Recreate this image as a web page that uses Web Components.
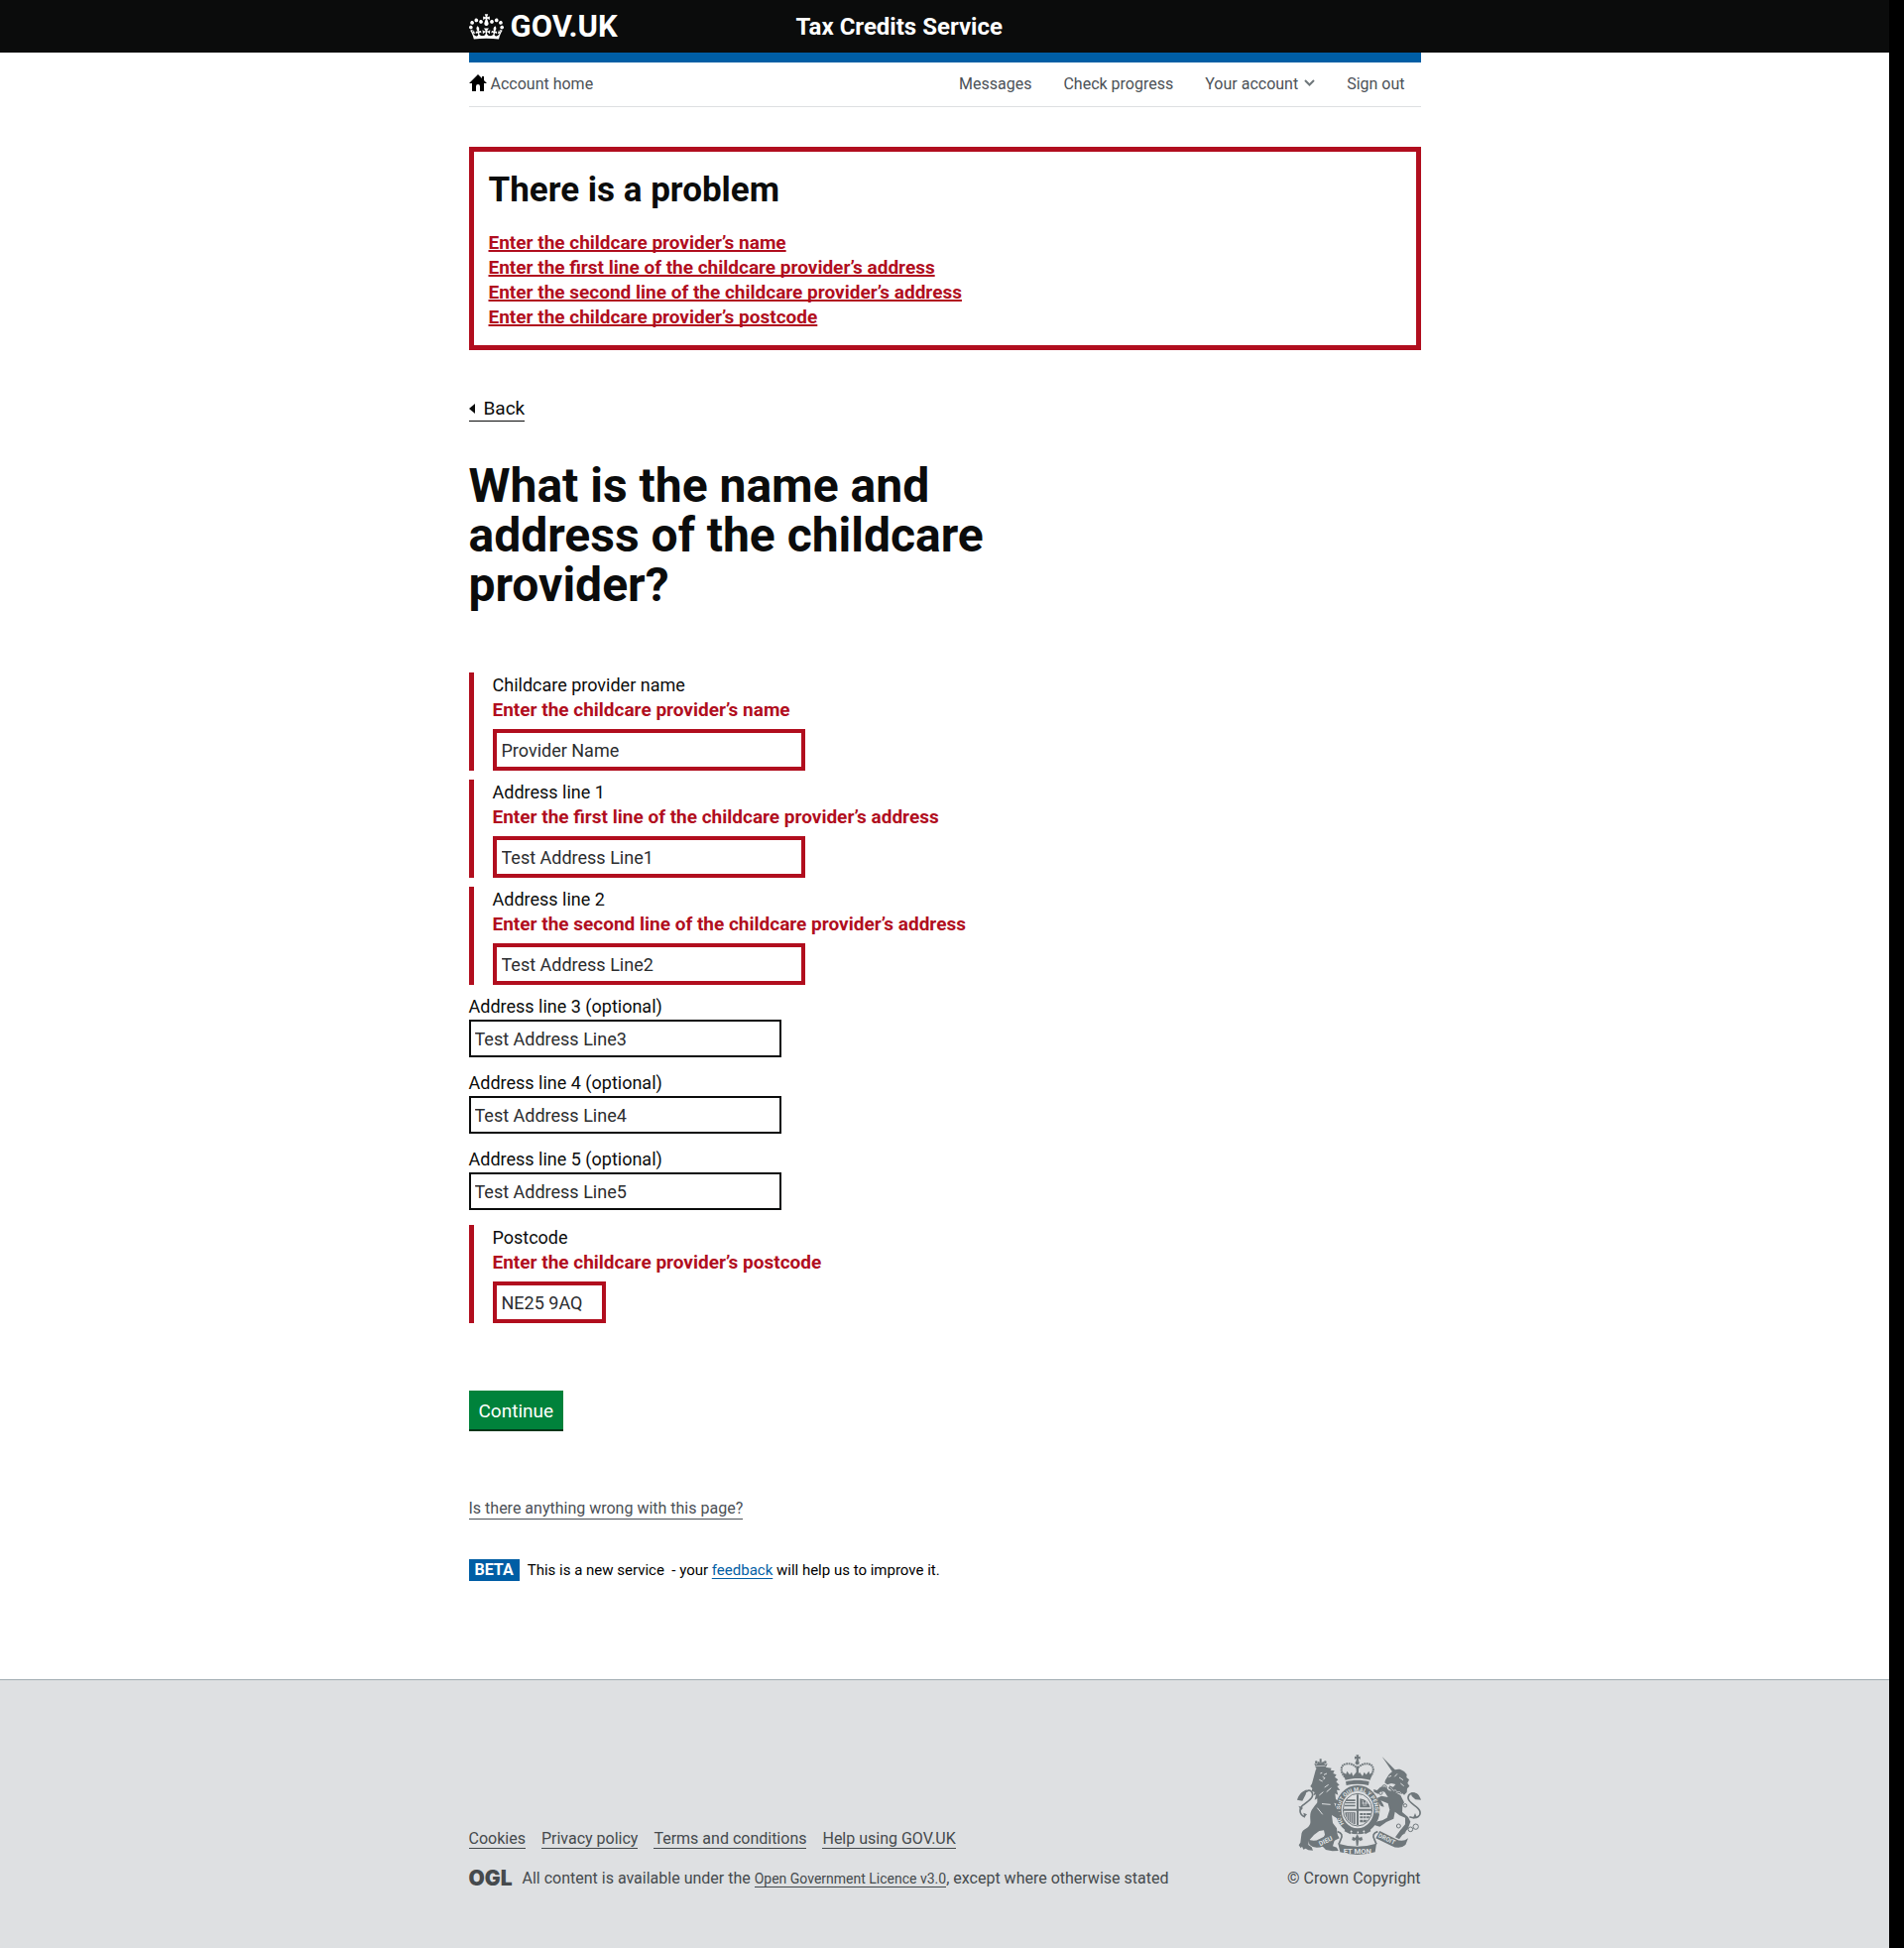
<!DOCTYPE html>
<html lang="en">
<head>
<meta charset="utf-8">
<title>Tax Credits Service</title>
<style>
  body { margin: 0; background: #000; font-family: Roboto, "Liberation Sans", sans-serif; font-size: 19px; line-height: 25px; color: #0b0c0c; }
</style>
</head>
<body>
<tax-page></tax-page>

<template id="tax-page">
  <style>
    :host { display: flex; flex-direction: column; min-height: 100vh; margin-right: 15px; background: #fff; }
    main { box-sizing: border-box; width: 100%; max-width: 960px; margin: 0 auto; flex: 1; padding-bottom: 98px; }
    h1 { margin: 40px 0 63px; max-width: 610px; font-size: 48px; line-height: 50px; font-weight: 700; }
    .back { display: inline-flex; align-items: center; gap: 9px; margin-top: 47px; color: #0b0c0c; text-decoration: none; border-bottom: 1px solid #0b0c0c; line-height: 24px; }
    form { display: flex; flex-direction: column; align-items: flex-start; }
    .address { display: flex; flex-direction: column; margin-bottom: 2px; align-self: stretch; }
    button { margin: 68px 0 0; border: 0; padding: 8px 10px 6px; background: #00823b; color: #fff; font: inherit; line-height: 25px; font-size: 19px; box-shadow: 0 2px 0 #003618; }
    .report { display: block; width: fit-content; margin-top: 70px; font-size: 16px; line-height: 20px; color: #4c5157; text-decoration: none; border-bottom: 1px solid #4c5157; }
  </style>
  <gov-header></gov-header>
  <main>
    <account-nav></account-nav>
    <error-summary heading="There is a problem">
      <error-link to="name">Enter the childcare provider’s name</error-link>
      <error-link to="line1">Enter the first line of the childcare provider’s address</error-link>
      <error-link to="line2">Enter the second line of the childcare provider’s address</error-link>
      <error-link to="postcode">Enter the childcare provider’s postcode</error-link>
    </error-summary>
    <a class="back" href="#back"><svg width="6" height="10" viewBox="0 0 6 10" aria-hidden="true"><path d="M6 0v10L0 5z" fill="#0b0c0c"/></svg>Back</a>
    <h1>What is the name and address of the childcare provider?</h1>
    <form>
      <div class="address">
        <text-field name="name" label="Childcare provider name" error="Enter the childcare provider’s name" value="Provider Name"></text-field>
        <text-field name="line1" label="Address line 1" error="Enter the first line of the childcare provider’s address" value="Test Address Line1"></text-field>
        <text-field name="line2" label="Address line 2" error="Enter the second line of the childcare provider’s address" value="Test Address Line2"></text-field>
        <text-field name="line3" label="Address line 3 (optional)" value="Test Address Line3"></text-field>
        <text-field name="line4" label="Address line 4 (optional)" value="Test Address Line4"></text-field>
        <text-field name="line5" label="Address line 5 (optional)" value="Test Address Line5"></text-field>
      </div>
      <text-field short name="postcode" label="Postcode" error="Enter the childcare provider’s postcode" value="NE25 9AQ"></text-field>
      <button type="button">Continue</button>
    </form>
    <a class="report" href="#report">Is there anything wrong with this page?</a>
    <phase-banner></phase-banner>
  </main>
  <gov-footer></gov-footer>
</template>

<template id="gov-header">
  <style>
    :host { display: block; background: #0b0c0c; color: #fff; }
    .wrap { max-width: 960px; height: 53px; margin: 0 auto; display: grid; grid-template-columns: 330px 1fr; align-items: center; }
    a { color: #fff; text-decoration: none; font-weight: 700; }
    .logo { display: flex; align-items: center; gap: 7px; font-size: 31px; line-height: 30px; }
    .name { font-size: 24px; line-height: 30px; }
    svg { display: block; }
  </style>
  <header class="wrap">
    <a class="logo" href="#gov">
      <svg width="35" height="26" viewBox="0 0 132 97" fill="#fff" aria-hidden="true"><path d="M25 30.2c3.5 1.5 7.7-.2 9.1-3.7 1.5-3.6-.2-7.8-3.9-9.2-3.6-1.4-7.6.3-9.1 3.9-1.4 3.5.3 7.5 3.9 9zM9 39.5c3.6 1.5 7.8-.2 9.2-3.7 1.5-3.6-.2-7.8-3.9-9.1-3.6-1.5-7.6.2-9.1 3.8-1.4 3.5.3 7.5 3.8 9zM4.4 57.2c3.5 1.5 7.7-.2 9.1-3.8 1.5-3.6-.2-7.7-3.9-9.1-3.5-1.5-7.6.3-9.1 3.8-1.4 3.5.3 7.6 3.9 9.1zm38.3-21.4c3.5 1.5 7.7-.2 9.1-3.8 1.5-3.6-.2-7.7-3.9-9.1-3.6-1.5-7.6.3-9.1 3.8-1.3 3.6.4 7.7 3.9 9.1zm64.4-5.6c-3.6 1.5-7.8-.2-9.1-3.7-1.5-3.6.2-7.8 3.8-9.2 3.6-1.4 7.7.3 9.2 3.9 1.3 3.5-.4 7.5-3.9 9zm15.9 9.3c-3.6 1.5-7.7-.2-9.1-3.7-1.5-3.6.2-7.8 3.7-9.1 3.6-1.5 7.7.2 9.2 3.8 1.5 3.5-.3 7.5-3.8 9zm4.7 17.7c-3.6 1.5-7.8-.2-9.2-3.8-1.5-3.6.2-7.7 3.9-9.1 3.6-1.5 7.7.3 9.2 3.8 1.3 3.5-.4 7.6-3.9 9.1zM89.3 35.8c-3.6 1.5-7.8-.2-9.2-3.8-1.4-3.6.2-7.7 3.9-9.1 3.6-1.5 7.7.3 9.2 3.8 1.4 3.6-.3 7.7-3.9 9.1zM69.7 17.7l8.9 4.7V9.3l-8.9 2.8c-.2-.3-.5-.6-.9-.9L72.4 0H59.6l3.5 11.2c-.3.3-.6.5-.9.9l-8.8-2.8v13.1l8.8-4.7c.3.3.6.7.9.9l-5 15.4v.1c-.2.8-.4 1.6-.4 2.4 0 4.1 3.1 7.5 7 8.1h.2c.3 0 .7.1 1 .1.4 0 .7 0 1-.1h.2c4-.6 7.1-4.1 7.1-8.1 0-.8-.1-1.7-.4-2.4V34l-5.1-15.4c.4-.2.7-.6 1-.9zM66 92.8c16.9 0 32.8 1.1 47.1 3.2 4-16.9 8.9-26.7 14-33.5l-9.6-3.4c1 4.9 1.1 7.2 0 10.2-1.5-1.4-3-4.3-4.2-8.7L108.6 76c2.8-2 5-3.2 7.5-3.3-4.4 9.4-10 11.9-13.6 11.2-4.3-.8-6.3-4.6-5.6-7.9 1-4.7 5.7-5.9 8-.5 4.3-8.7-3-11.4-7.6-8.8 7.1-7.2 7.9-13.5 2.1-21.1-8 6.1-8.1 12.3-4.5 20.8-4.7-5.4-12.1-2.5-9.5 6.2 3.4-5.2 7.9-2 7.2 3.1-.6 4.3-6.4 7.8-13.5 7.2-10.3-.9-10.9-8-11.2-13.8 2.5-.5 7.1 1.8 11 7.3L80.2 60c-4.1 4.4-8 5.3-12.3 5.4 1.4-4.4 8-11.6 8-11.6H55.5s6.4 7.2 7.9 11.6c-4.2-.1-8-1-12.3-5.4l1.4 16.4c3.9-5.500 8.500-7.700 10.900-7.300-.3 5.800-.9 12.800-11.100 13.800-7.200.6-12.900-2.900-13.500-7.200-.7-5 3.800-8.300 7.100-3.100 2.700-8.700-4.600-11.600-9.400-6.200 3.700-8.500 3.600-14.700-4.600-20.800-5.800 7.600-5 13.900 2.200 21.100-4.700-2.600-11.900.1-7.700 8.800 2.300-5.500 7.100-4.200 8.100.5.7 3.300-1.300 7.100-5.700 7.900-3.500.7-9-1.800-13.500-11.200 2.500.1 4.700 1.300 7.500 3.300l-4.700-15.400c-1.200 4.400-2.700 7.200-4.300 8.700-1.100-3-.9-5.300 0-10.200l-9.500 3.400c5 6.900 9.900 16.700 14 33.500 14.800-2.100 30.800-3.200 47.700-3.200z"/></svg>
      <span>GOV.UK</span>
    </a>
    <a class="name" href="#service">Tax Credits Service</a>
  </header>
</template>

<template id="account-nav">
  <style>
    :host { display: block; border-top: 10px solid #005ea5; border-bottom: 1px solid #dee0e2; font-size: 16px; line-height: 20px; }
    nav { display: flex; align-items: center; gap: 32px; height: 44px; padding-right: 16px; }
    a { color: #4c5157; text-decoration: none; display: flex; align-items: center; }
    .home { margin-right: auto; gap: 4px; }
    .menu { gap: 6px; }
    svg { display: block; margin-bottom: 4px; }
  </style>
  <nav>
    <a class="home" href="#home"><svg width="18" height="17" viewBox="0 0 18 17" aria-hidden="true"><path d="M9 0 0 9h3v8h4v-5a2 2 0 0 1 4 0v5h4V9h3l-3-3V2h-2v2z" fill="#000"/></svg>Account home</a>
    <a href="#messages">Messages</a>
    <a href="#progress">Check progress</a>
    <a class="menu" href="#account">Your account<svg width="11" height="7" viewBox="0 0 11 7" fill="none" stroke="#6f777b" stroke-width="2" aria-hidden="true"><path d="m1 1 4.500 4.500L10 1"/></svg></a>
    <a href="#signout">Sign out</a>
  </nav>
</template>

<template id="error-summary">
  <style>
    :host { display: block; margin-top: 40px; border: 5px solid #b10e1e; padding: 19px 15px 16px; }
    h2 { margin: 0 0 20px; font-size: 35px; line-height: 40px; font-weight: 700; }
    ul { margin: 0; padding: 0; display: flex; flex-direction: column; }
  </style>
  <h2></h2>
  <ul role="list"><slot></slot></ul>
</template>

<template id="error-link">
  <style>
    :host { display: block; }
    a { color: #b10e1e; font-weight: 700; font-size: 19px; line-height: 25px; text-decoration: underline; text-decoration-thickness: 2px; text-underline-offset: 1px; text-decoration-skip-ink: none; }
  </style>
  <a><slot></slot></a>
</template>

<template id="text-field">
  <style>
    :host { display: flex; flex-direction: column; align-items: flex-start; margin-bottom: 13px; }
    label, .error { display: block; line-height: 25px; font-size: 18px; }
    .error { color: #b10e1e; font-size: 19px; font-weight: 700; }
    input { box-sizing: border-box; width: 315px; height: 38px; margin: 1px 0 0; padding: 4px; border: 2px solid #0b0c0c; border-radius: 0; background: #fff; color: #2b2d2f; font: inherit; font-size: 18px; outline: 0; }
    :host([error]) { border-left: 5px solid #b10e1e; padding-left: 19px; margin-bottom: 9px; }
    :host([error]) input { height: 42px; margin-top: 7px; padding: 4px 5px; border: 4px solid #b10e1e; }
    :host([short]) { margin-bottom: 0; }
    :host([short]) input { width: 114px; }
  </style>
  <label for="box"></label>
  <input id="box" type="text">
</template>

<template id="phase-banner">
  <style>
    :host { display: flex; align-items: center; gap: 8px; margin-top: 40px; font-size: 15px; line-height: 22px; color: #000; }
    strong { background: #005ea5; color: #fff; font-size: 16px; padding: 0 6px; }
    p { margin: 0; white-space: pre-wrap; }
    a { color: #005ea5; text-underline-offset: 3px; text-decoration-skip-ink: none; }
  </style>
  <strong>BETA</strong>
  <p>This is a new service&nbsp; - your <a href="#feedback">feedback</a> will help us to improve it.</p>
</template>

<template id="gov-footer">
  <style>
    :host { display: block; background: #dee0e2; border-top: 1px solid #a1acb2; font-size: 16px; line-height: 20px; color: #454a4d; }
    footer { max-width: 960px; margin: 0 auto; padding: 75px 0 60px; display: flex; justify-content: space-between; align-items: flex-end; }
    ul { margin: 0 0 20px; padding: 0; list-style: none; display: flex; gap: 16px; }
    a { color: #454a4d; text-decoration: none; border-bottom: 1px solid #454a4d; }
    p { margin: 0; display: flex; align-items: center; gap: 10px; }
    .ogl { font-family: Inter, sans-serif; font-weight: 900; font-size: 21px; }
    .small { font-size: 14px; }
    .crest { display: flex; flex-direction: column; align-items: flex-end; gap: 13px; }
    .crest a { border: 0; }
    svg { display: block; }
  </style>
  <footer>
    <div>
      <ul>
        <li><a href="#cookies">Cookies</a></li>
        <li><a href="#privacy">Privacy policy</a></li>
        <li><a href="#terms">Terms and conditions</a></li>
        <li><a href="#help">Help using GOV.UK</a></li>
      </ul>
      <p><span class="ogl">OGL</span><span>All content is available under the <a class="small" href="#licence">Open Government Licence v3.0</a>, except where otherwise stated</span></p>
    </div>
    <div class="crest">
      <royal-arms></royal-arms>
      <a href="#copyright">© Crown Copyright</a>
    </div>
  </footer>
</template>

<template id="royal-arms">
  <style>:host { display: block; } svg { display: block; } text { font-family: Roboto, sans-serif; font-weight: 700; }</style>
  <svg width="125" height="102" viewBox="84 57 375 306" fill="#6f777b" aria-hidden="true">
    <!-- imperial crown -->
    <path d="M262 58h9l-2 6 6-2v9l-6-2 2 8h-9l2-8-6 2v-9l6 2z"/>
    <circle cx="266" cy="82" r="6"/>
    <path d="M228 125c-14-16-14-38 6-40 14-2 24 4 32 14 8-10 20-16 33-14 20 3 19 25 5 40" fill="none" stroke="#6f777b" stroke-width="6" stroke-dasharray="5 2"/>
    <path d="M263 92h7v28h-7zM230 134l-8-24 10 6 3-9 8 11 6-8 4 12 10-12 4 10 6-10 9 12 5-12 6 8 8-11 3 9 9-6-8 24c-24-7-50-7-75 0z"/>
    <path d="M231 139c23-6 48-6 71 0l-2 11c-22-5-45-5-67 0z"/>
    <!-- garter and shield -->
    <ellipse cx="267" cy="224" rx="58" ry="65" fill="none" stroke="#6f777b" stroke-width="18"/>
    <ellipse cx="267" cy="224" rx="44" ry="49" fill="none" stroke="#6f777b" stroke-width="3"/>
    <path d="M264 178h6v43h39v6h-39v43h-6v-43h-39v-6h39z"/>
    <path d="M233 193h27v5h-29zm-3 8h30v4h-32zm-2 8h32v5h-33zM274 190q25 3 31 27h-31zM274 234h34l-2 6h-32zm0 10h30l-3 6h-27zm0 10h24l-7 8h-17z"/>
    <path d="M282 195l4 18m7-16-2 16m-11-9h20M284 234v26m9-26v22" stroke="#dee0e2" stroke-width="2"/>
    <path d="M229 232c1 18 12 33 31 36v-36z"/>
    <path d="M236 234v20m6-20v26m6-26v30m6-30v32" stroke="#dee0e2" stroke-width="2"/>
    <path id="ring" d="M226 266a53 60 0 1 1 82 0" fill="none"/>
    <text font-size="17" fill="#dee0e2"><textPath href="#ring">HONI SOIT QUI MAL Y PENSE</textPath></text>
    <path d="M232 278l16 8-3 12-18-9zm71 0-16 8 3 12 17-9z"/>
    <path d="m246 288 4 3m16 1h4m14-1 4-3" stroke="#dee0e2" stroke-width="5"/>
    <!-- crowned lion -->
    <path d="M136 84l5 14h29l6-14-8 3-4-9-8 4-8-4-4 8zM152 70h6v12h-6z"/>
    <circle cx="142" cy="80" r="4"/><circle cx="169" cy="80" r="4"/><path d="m139 92 31-1" stroke="#dee0e2" stroke-width="2"/>
    <path d="M140 104l4-8h30l14 2-3 6 12 2-4 8 10 4-5 7 10 8-6 6 10 10-7 4 9 12-10-1 4 15-9-4 2 17 11 8-5 7-11-4 4 10 8 16 11 4-6 6 4 9-12 2-16-10 3 24 12 16 2 20-10 20-4 14 12 4 5 10-18 1-20-4-8-8-6-4 2-14 9-20-3-13-14 2-16 12-16 18-1 12 10 7 4 10-14-1-8-5-7 3-4-9-4 5-6-9 5-8 3-24c1-14 12-16 21-24 11-11 4-17 6-37 2-15 13-24 21-36v-12l-8 4 4-16-8 3 4-10-9-4 2-8-6-6 5-8z"/>
    <path d="M154 114l6-2m14 2-9 4m-4 6 7 4-5 5m-12 0 10 5m18 10-12 8m20 2-14 12m-10 0-12 10m8 26 26 2m-40 10 16 20" fill="none" stroke="#dee0e2" stroke-width="3"/>
    <path d="M108 246c-20-8-18-28-5-37 18-13 34-24 26-38-6-9-18-7-26 8" fill="none" stroke="#6f777b" stroke-width="5"/>
    <path d="M84 194c5-14 12-24 29-31l-3 15-10 19zM88 212l14 6-6 8zm15 21 3 14 8-9z"/>
    <!-- chained unicorn -->
    <path d="M341 63l42 43-8 7z"/>
    <path d="M372 108c9-6 18-8 26-5l10 5 8 9-1 9 8 7-5 10 6 9-7 8-1 11-8 8-12-10-15-5-10 5-3-6 14-16-13-3-12 4-8-6 2-8 11-17z"/>
    <path d="M361 125l8-4m18-6-8 9m14 2 12 8m-8 10 10 8" fill="none" stroke="#dee0e2" stroke-width="3"/>
    <path d="M364 151l18 8 23 8-4 9-23-5-18-12z"/><path d="m365 156 6 4 4 6 7-2 4 6 8-1 5 5" fill="none" stroke="#dee0e2" stroke-width="2"/>
    <path d="M362 166l-12-12-14 1-10 10-11-3 2 8 12 6 10-9 10 3 10 16-20-4-12 6 2 12 9 13 9 2-3-8-7-11 22 9 5 19-8 24-14 8-14 3-13 10 19 6 20-14 22-10 4-21 14 11 17 7 0 20-17 21-13 18 12 6 9-12 17-19 8-22-7-14-18-15 1-20 5-9-11-22-23-13z"/>
    <path d="M424 245c24 8 36-3 31-18-5-14-33-22-35-38-1-14 14-19 25-10" fill="none" stroke="#6f777b" stroke-width="5"/>
    <path d="M428 172c18-2 25 5 31 22l-17-1-11-10zM441 234l5 13-12 4z"/>
    <g fill="none" stroke="#6f777b" stroke-width="3"><circle cx="348" cy="156" r="7"/><circle cx="337" cy="173" r="5"/><circle cx="391" cy="273" r="6"/><circle cx="404" cy="290" r="7"/><circle cx="427" cy="283" r="7"/><circle cx="443" cy="275" r="8"/><circle cx="411" cy="211" r="5"/></g>
    <!-- motto ribbon and badge -->
    <path d="M114 310q18 14 38 2l48-24 12 22-46 22q-26 14-44-2zM420 310q-18 14-38 2l-48-24-12 22 46 22q26 14 44-2z"/>
    <path d="M206 290q20 6 10 24l-6 14M328 290q-20 6-10 24l6 14" fill="none" stroke="#6f777b" stroke-width="5"/>
    <path d="M208 326q58 18 116 0l-4 26q-54 16-106 0z"/>
    <path d="M266 296l6 12 8-3 3 10-8 4-4-4-2 18h-6l-2-18-4 4-8-4 3-10 8 3z" stroke="#dee0e2" stroke-width="1"/>
    <text x="224" y="356" font-size="23" fill="#dee0e2">ET MON</text>
    <text x="154" y="334" font-size="20" fill="#dee0e2" transform="rotate(-26 154 334)">DIEU</text>
    <text x="328" y="306" font-size="19" fill="#dee0e2" transform="rotate(26 328 306)">DROIT</text>
  </svg>
</template>

<script>
  class TemplateElement extends HTMLElement {
    constructor() {
      super();
      const root = this.attachShadow({ mode: "open" });
      root.append(document.getElementById(this.localName).content.cloneNode(true));
    }
  }

  class TextField extends TemplateElement {
    connectedCallback() {
      const label = this.shadowRoot.querySelector("label");
      const input = this.shadowRoot.querySelector("input");
      label.textContent = this.getAttribute("label");
      input.name = this.getAttribute("name");
      input.value = this.getAttribute("value");
      const error = this.getAttribute("error");
      if (error && !this.shadowRoot.querySelector(".error")) {
        const message = document.createElement("span");
        message.className = "error";
        message.id = "message";
        message.textContent = error;
        label.after(message);
        input.setAttribute("aria-describedby", "message");
        input.setAttribute("aria-invalid", "true");
      }
    }
    focus() { this.shadowRoot.querySelector("input").focus(); }
  }

  class ErrorSummary extends TemplateElement {
    connectedCallback() {
      this.shadowRoot.querySelector("h2").textContent = this.getAttribute("heading");
    }
  }

  class ErrorLink extends TemplateElement {
    connectedCallback() {
      this.setAttribute("role", "listitem");
      const link = this.shadowRoot.querySelector("a");
      const target = this.getAttribute("to");
      link.href = "#" + target;
      link.onclick = (event) => {
        event.preventDefault();
        this.getRootNode().querySelector(`text-field[name="${target}"]`).focus();
      };
    }
  }

  customElements.define("gov-header", class extends TemplateElement {});
  customElements.define("account-nav", class extends TemplateElement {});
  customElements.define("error-summary", ErrorSummary);
  customElements.define("error-link", ErrorLink);
  customElements.define("text-field", TextField);
  customElements.define("phase-banner", class extends TemplateElement {});
  customElements.define("royal-arms", class extends TemplateElement {});
  customElements.define("gov-footer", class extends TemplateElement {});
  customElements.define("tax-page", class extends TemplateElement {});
</script>
</body>
</html>
